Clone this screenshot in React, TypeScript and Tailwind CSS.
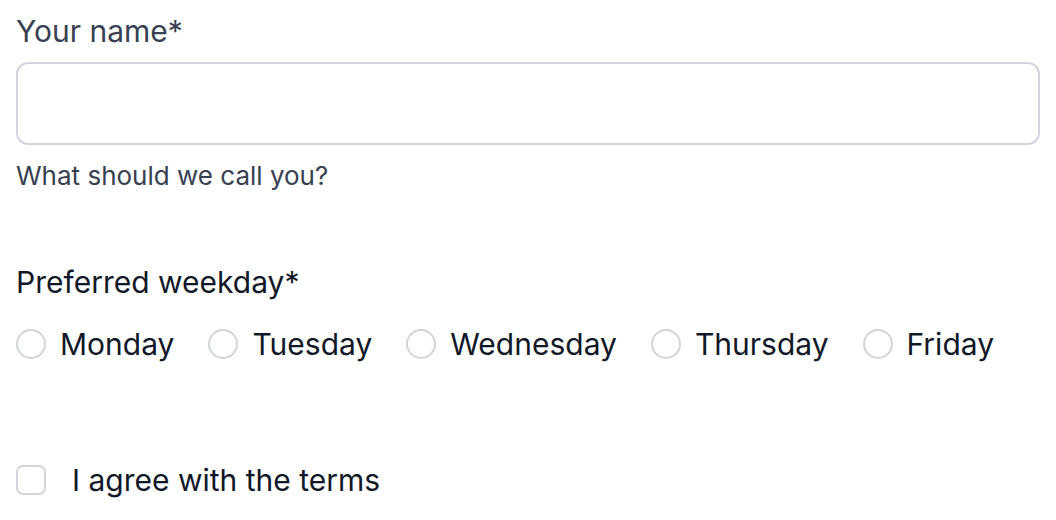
import {useState} from 'react';

const DAYS = ['Monday', 'Tuesday', 'Wednesday', 'Thursday', 'Friday'];

export default function App() {
	const [name, setName] = useState('');
	const [day, setDay] = useState<string | null>(null);
	const [agree, setAgree] = useState(false);

	return (
		<div className="min-h-[520px] bg-white px-4 pt-2 font-['Inter',sans-serif]">
			<label className="block text-[30px] leading-[46px] text-[#374151]">
				Your name*
			</label>

			<input
				className="mt-[8px] block h-[83px] w-full rounded-[12px] border-2 border-[#d1d5db] px-4 text-[28px] outline-none"
				onChange={(event) => setName(event.target.value)}
				value={name}
			/>

			<p className="mt-[12px] text-[26px] leading-[38px] text-[#374151]">
				What should we call you?
			</p>

			<p className="mt-[66px] text-[30px] leading-[42px] text-[#111827]">
				Preferred weekday*
			</p>

			<div className="mt-[20px] flex items-center gap-[34px]">
				{DAYS.map((d) => (
					<label className="flex items-center gap-[14px]" key={d}>
						<button
							aria-label={d}
							className="h-[30px] w-[30px] rounded-full border-2 border-[#d1d5db] bg-white"
							onClick={() => setDay(d)}
						>
							{day === d && (
								<span className="m-auto block h-3 w-3 rounded-full bg-[#111827]" />
							)}
						</button>
						<span className="text-[30px] leading-[42px] text-[#111827]">
							{d}
						</span>
					</label>
				))}
			</div>

			<div className="mt-[94px] flex items-center gap-[26px]">
				<button
					aria-label="I agree with the terms"
					className="h-[30px] w-[30px] rounded-[7px] border-2 border-[#d1d5db] bg-white"
					onClick={() => setAgree((v) => !v)}
				>
					{agree && <span className="text-sm">✓</span>}
				</button>
				<span className="text-[30px] leading-[42px] text-[#111827]">
					I agree with the terms
				</span>
			</div>
		</div>
	);
}
